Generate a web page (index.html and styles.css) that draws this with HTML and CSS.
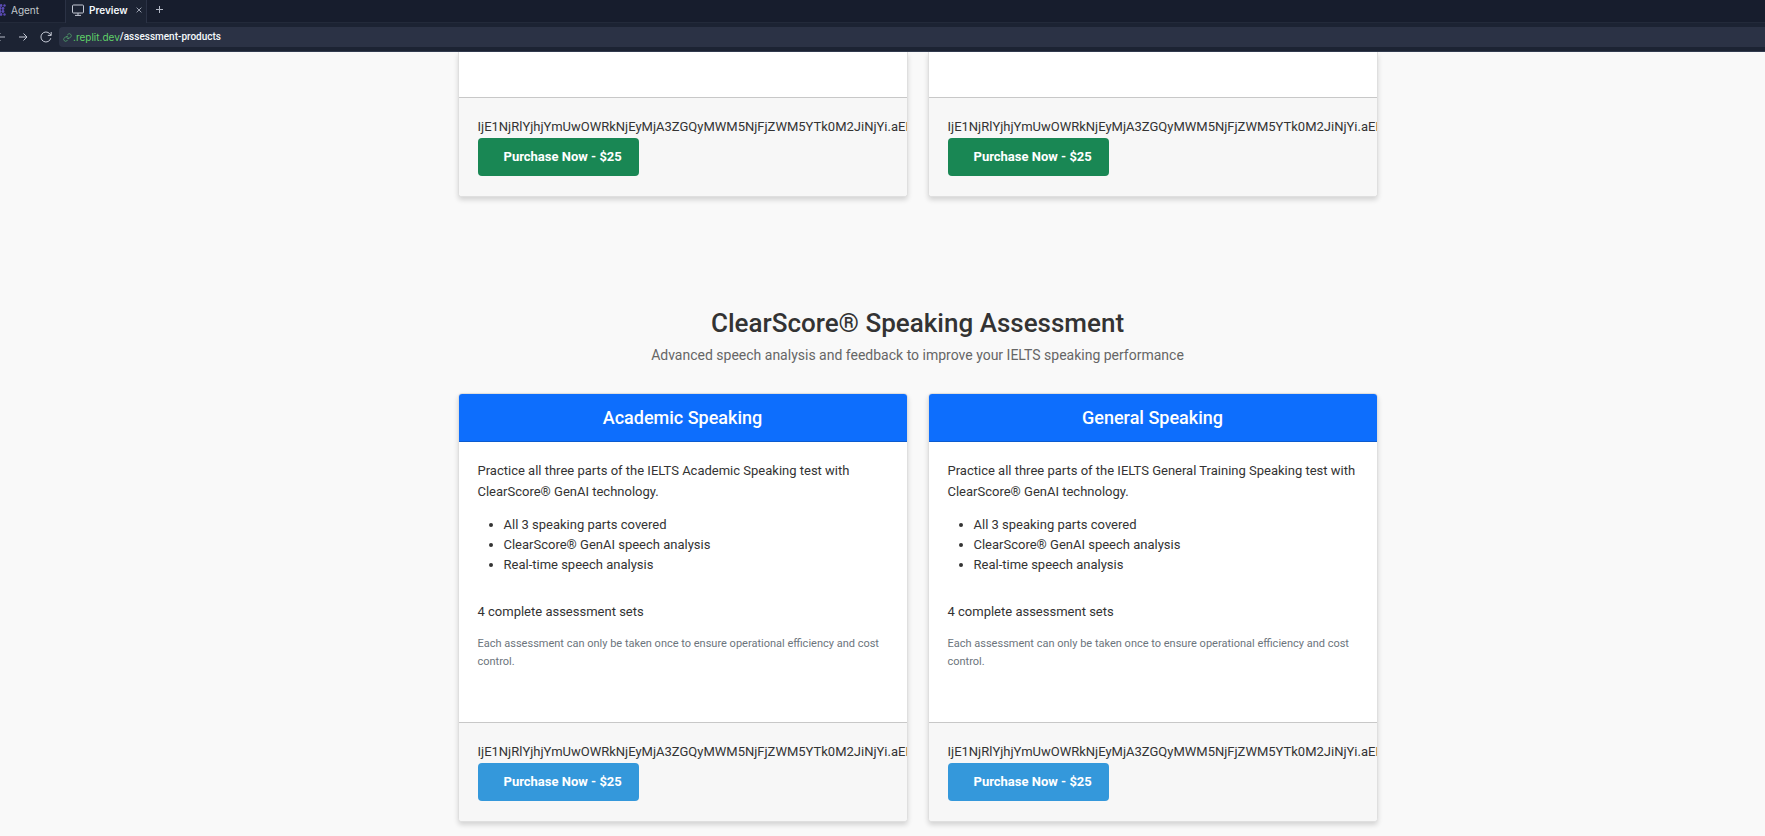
FILE: index.html
```html
<!DOCTYPE html>
<html lang="en">
<head>
<meta charset="utf-8">
<title>Assessment Products</title>
<link rel="stylesheet" href="styles.css">
</head>
<body>
<header class="chrome">
  <div class="tabs">
    <button class="tab tab-agent" type="button">
      <svg viewBox="0 0 6 12" width="6" height="12" fill="#5b4bb5" aria-hidden="true"><circle cx="1" cy="1.5" r="1.4"/><circle cx="4.5" cy="1.5" r="1.2"/><circle cx="0" cy="4.5" r="1.4"/><circle cx="3" cy="4.5" r="1.4"/><circle cx="0" cy="7.5" r="1.4"/><circle cx="3" cy="7.5" r="1.4"/><circle cx="1" cy="10.5" r="1.4"/><circle cx="4.5" cy="10.5" r="1.2"/></svg>
      <span>Agent</span>
    </button>
    <div class="tab tab-preview">
      <svg viewBox="0 0 12 12" width="12" height="12" fill="none" stroke="#c5cad6" aria-hidden="true"><rect x="0.5" y="1" width="11" height="8" rx="1"/><path d="M6 9v2.3M3 11.4h6"/></svg>
      <span class="tab-title">Preview</span>
      <button class="icon-button" type="button" aria-label="Close tab"><svg viewBox="0 0 6 6" width="6" height="6" fill="none" stroke="#a9afbd" stroke-width="0.9"><path d="M0.6 0.6l4.8 4.8M5.4 0.6L0.6 5.4"/></svg></button>
    </div>
    <button class="icon-button new-tab" type="button" aria-label="New tab"><svg viewBox="0 0 7 7" width="7" height="7" fill="none" stroke="#b4bac7"><path d="M3.5 0v7M0 3.5h7"/></svg></button>
  </div>
  <div class="toolbar">
    <div class="nav">
      <button class="icon-button" type="button" aria-label="Back"><svg viewBox="0 0 5 10" width="5" height="10" fill="none" stroke="#b4bac7"><path d="M5 5H-3M0.5 1.5L-3 5l3.5 3.5"/></svg></button>
      <button class="icon-button" type="button" aria-label="Forward"><svg viewBox="0 0 10 10" width="10" height="10" fill="none" stroke="#c5cad6"><path d="M1 5h8M5.5 1.5L9 5 5.5 8.5"/></svg></button>
      <button class="icon-button" type="button" aria-label="Reload"><svg viewBox="0 0 12 12" width="12" height="12" fill="none" stroke="#c5cad6"><path d="M10.8 7.2A5 5 0 1 1 9.8 2.8L11 4.2M11.2 1v3.4H7.8"/></svg></button>
    </div>
    <div class="address">
      <svg viewBox="0 0 24 24" width="9" height="9" fill="none" stroke="#4f9d6a" stroke-width="2.4" stroke-linecap="round" aria-hidden="true"><path d="M10 13a5 5 0 0 0 7.500.500l3.500-3.500a5 5 0 0 0-7-7l-2 2"/><path d="M14 11a5 5 0 0 0-7.500-.500L3 14a5 5 0 0 0 7 7l2-2"/></svg>
      <span class="host">.replit.dev</span><span class="path">/assessment-products</span>
    </div>
  </div>
</header>
<main class="page">
  <section class="cards">
    <article class="card">
      <div class="card-rest"></div>
      <form class="card-footer">
        <div class="token">IjE1NjRlYjhjYmUwOWRkNjEyMjA3ZGQyMWM5NjFjZWM5YTk0M2JiNjYi.aEM</div>
        <button class="buy buy-green" type="button">Purchase Now - $25</button>
      </form>
    </article>
    <article class="card">
      <div class="card-rest"></div>
      <form class="card-footer">
        <div class="token">IjE1NjRlYjhjYmUwOWRkNjEyMjA3ZGQyMWM5NjFjZWM5YTk0M2JiNjYi.aEM</div>
        <button class="buy buy-green" type="button">Purchase Now - $25</button>
      </form>
    </article>
  </section>
  <div class="intro">
    <h2>ClearScore® Speaking Assessment</h2>
    <p>Advanced speech analysis and feedback to improve your IELTS speaking performance</p>
  </div>
  <section class="cards">
    <article class="card">
      <h3 class="card-header">Academic Speaking</h3>
      <div class="card-body">
        <p>Practice all three parts of the IELTS Academic Speaking test with ClearScore® GenAI technology.</p>
        <ul>
          <li>All 3 speaking parts covered</li>
          <li>ClearScore® GenAI speech analysis</li>
          <li>Real-time speech analysis</li>
        </ul>
        <p>4 complete assessment sets</p>
        <p class="note">Each assessment can only be taken once to ensure operational efficiency and cost control.</p>
      </div>
      <form class="card-footer">
        <div class="token">IjE1NjRlYjhjYmUwOWRkNjEyMjA3ZGQyMWM5NjFjZWM5YTk0M2JiNjYi.aEM</div>
        <button class="buy buy-blue" type="button">Purchase Now - $25</button>
      </form>
    </article>
    <article class="card">
      <h3 class="card-header">General Speaking</h3>
      <div class="card-body">
        <p>Practice all three parts of the IELTS General Training Speaking test with ClearScore® GenAI technology.</p>
        <ul>
          <li>All 3 speaking parts covered</li>
          <li>ClearScore® GenAI speech analysis</li>
          <li>Real-time speech analysis</li>
        </ul>
        <p>4 complete assessment sets</p>
        <p class="note">Each assessment can only be taken once to ensure operational efficiency and cost control.</p>
      </div>
      <form class="card-footer">
        <div class="token">IjE1NjRlYjhjYmUwOWRkNjEyMjA3ZGQyMWM5NjFjZWM5YTk0M2JiNjYi.aEM</div>
        <button class="buy buy-blue" type="button">Purchase Now - $25</button>
      </form>
    </article>
  </section>
</main>
</body>
</html>
```
FILE: styles.css
```css
* {
  box-sizing: border-box;
}

body {
  margin: 0;
  background: #f9f9f9;
  color: #333;
  font-family: Roboto, "Liberation Sans", sans-serif;
  font-size: 13px;
  line-height: 21px;
}

h2,
h3,
p,
ul {
  margin: 0;
}

button {
  border: 0;
  padding: 0;
  background: none;
  color: inherit;
  font: inherit;
}

/* Browser pane */
.chrome {
  background: #1c2333;
  border-bottom: 1px solid #323b4f;
  color: #f5f9fc;
  font-family: Inter, "Open Sans", sans-serif;
  font-size: 10px;
  line-height: 20px;
}

.tabs {
  display: flex;
  align-items: stretch;
  height: 23px;
  background: #171d2d;
  border-bottom: 1px solid #232a3a;
}

.tab {
  display: flex;
  align-items: center;
  padding-bottom: 3px;
}

.tab-agent {
  gap: 5px;
  width: 65px;
  color: #c2c8cc;
}

.tab-preview {
  gap: 5px;
  width: 82px;
  margin-bottom: -1px;
  padding-left: 6px;
  padding-bottom: 4px;
  background: #1c2333;
  border: solid #2b3245;
  border-width: 0 1px;
}

.tab-title {
  flex: 1;
  font-weight: 600;
}

.tab-preview .icon-button {
  margin-right: 4px;
}

.icon-button {
  display: flex;
  align-items: center;
}

.new-tab {
  padding: 0 9px 3px;
}

.toolbar {
  display: flex;
  align-items: center;
  gap: 6px;
  padding: 4px 0;
}

.nav {
  display: flex;
  align-items: center;
  gap: 12px;
  padding-right: 1px;
}

.nav .icon-button:first-child {
  margin-right: 1px;
}

.address {
  display: flex;
  flex: 1;
  align-items: center;
  padding-left: 4px;
  background: #2b3245;
  border-radius: 4px 0 0 4px;
}

.host {
  padding-left: 1px;
  color: #5fd068;
}

.path {
  font-family: Roboto, "Liberation Sans", sans-serif;
  font-weight: 500;
}

/* Product page */
.page {
  display: flex;
  flex-direction: column;
  width: 990px;
  max-width: 100%;
  margin: 0 auto;
  padding: 0 0 12px 70px;
}

.cards {
  display: grid;
  grid-template-columns: 1fr 1fr;
  gap: 20px;
}

.card {
  display: flex;
  flex-direction: column;
  min-width: 0;
  overflow: hidden;
  background: #fff;
  border: 1px solid #dfdfdf;
  border-radius: 4px;
  box-shadow: 0 3px 5px rgba(0, 0, 0, 0.15);
}

.card-rest {
  height: 45px;
}

.cards:first-child .card {
  border-top: 0;
  border-radius: 0 0 4px 4px;
}

.card-header {
  padding: 13px 19px 12px;
  background: #0d6efd;
  border-bottom: 1px solid #0c5bcf;
  color: #fff;
  font-size: 18px;
  font-weight: 500;
  line-height: 22px;
  text-align: center;
}

.card-body {
  flex: 1;
  padding: 18px 19px 51px;
}

.card-body ul {
  margin: 13px 0 26px;
  padding-left: 26px;
  line-height: 20px;
}

.card-body .note {
  margin-top: 13px;
  color: #6c757d;
  font-size: 11px;
  line-height: 18px;
}

.card-footer {
  padding: 18px 19px 20px;
  background: #f7f7f7;
  border-top: 1px solid #c8c8c8;
}

.token {
  line-height: 22px;
  white-space: nowrap;
}

.buy {
  display: block;
  padding: 8px 17px 8px 26px;
  border-radius: 4px;
  color: #fff;
  font-weight: 700;
  line-height: 22px;
}

.buy-green {
  background: #198754;
}

.buy-blue {
  background: #3498db;
}

.intro {
  padding: 111px 0 27px;
  text-align: center;
}

.intro h2 {
  margin-bottom: 5px;
  font-size: 26px;
  font-weight: 500;
  line-height: 31px;
}

.intro p {
  color: #666;
  font-size: 14px;
  line-height: 22px;
}
```
